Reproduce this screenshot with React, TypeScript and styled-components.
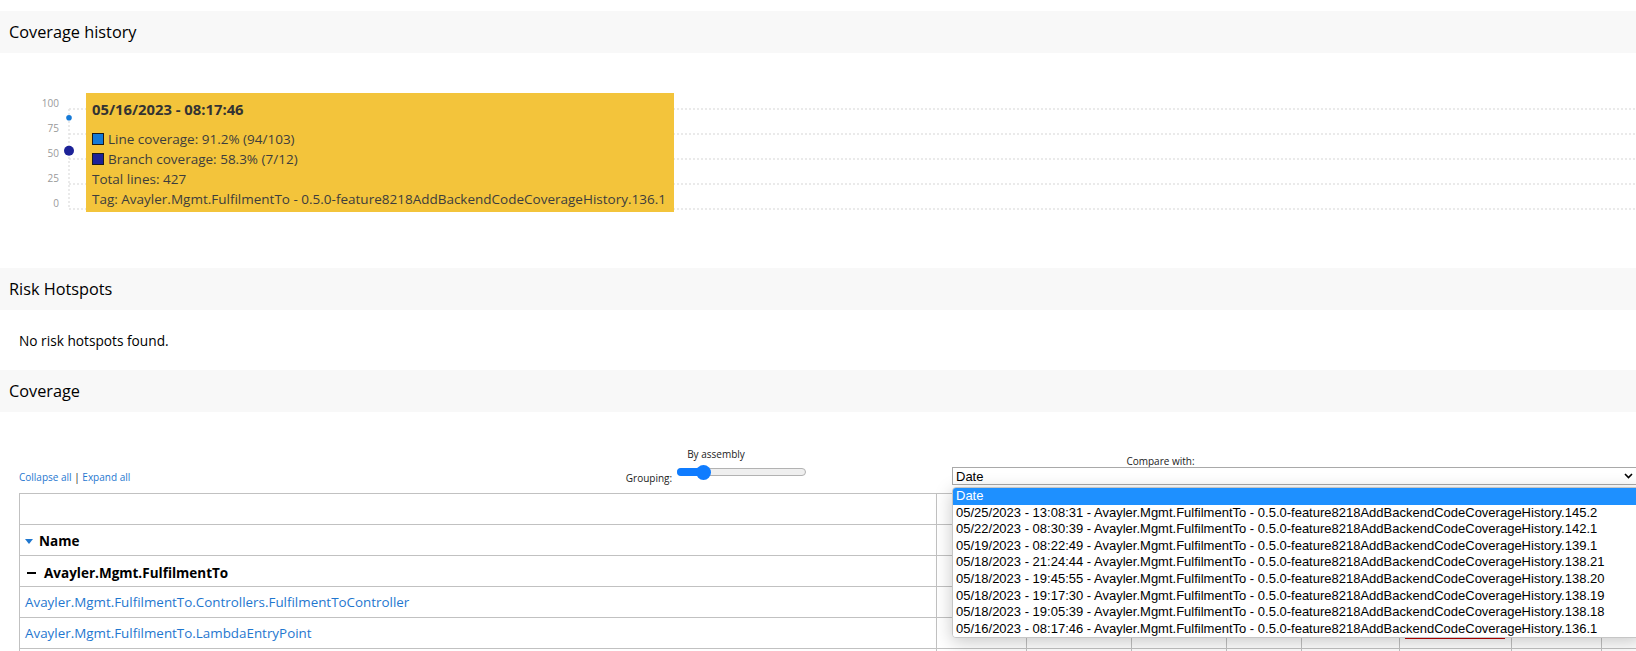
import React from "react";
import styled, { createGlobalStyle } from "styled-components";

const GlobalStyle = createGlobalStyle`
  html, body {
    margin: 0;
    padding: 0;
    background: #ffffff;
    overflow: hidden;
  }
  body {
    font-family: "Open Sans", "Noto Sans", sans-serif;
    color: #000000;
  }
`;

const LINE_BLUE = "#1479d7";
const BRANCH_BLUE = "#1c2298";

const history = [
  "05/25/2023 - 13:08:31 - Avayler.Mgmt.FulfilmentTo - 0.5.0-feature8218AddBackendCodeCoverageHistory.145.2",
  "05/22/2023 - 08:30:39 - Avayler.Mgmt.FulfilmentTo - 0.5.0-feature8218AddBackendCodeCoverageHistory.142.1",
  "05/19/2023 - 08:22:49 - Avayler.Mgmt.FulfilmentTo - 0.5.0-feature8218AddBackendCodeCoverageHistory.139.1",
  "05/18/2023 - 21:24:44 - Avayler.Mgmt.FulfilmentTo - 0.5.0-feature8218AddBackendCodeCoverageHistory.138.21",
  "05/18/2023 - 19:45:55 - Avayler.Mgmt.FulfilmentTo - 0.5.0-feature8218AddBackendCodeCoverageHistory.138.20",
  "05/18/2023 - 19:17:30 - Avayler.Mgmt.FulfilmentTo - 0.5.0-feature8218AddBackendCodeCoverageHistory.138.19",
  "05/18/2023 - 19:05:39 - Avayler.Mgmt.FulfilmentTo - 0.5.0-feature8218AddBackendCodeCoverageHistory.138.18",
  "05/16/2023 - 08:17:46 - Avayler.Mgmt.FulfilmentTo - 0.5.0-feature8218AddBackendCodeCoverageHistory.136.1",
];

interface ClassRow {
  name: string;
  covered: number;
  uncovered: number;
  coverable: number;
  total: number;
  bcovered: number;
  btotal: number;
}

const assembly: ClassRow = {
  name: "Avayler.Mgmt.FulfilmentTo",
  covered: 94,
  uncovered: 9,
  coverable: 103,
  total: 427,
  bcovered: 7,
  btotal: 12,
};

const classes: ClassRow[] = [
  {
    name: "Avayler.Mgmt.FulfilmentTo.Controllers.FulfilmentToController",
    covered: 94,
    uncovered: 8,
    coverable: 102,
    total: 372,
    bcovered: 7,
    btotal: 12,
  },
  {
    name: "Avayler.Mgmt.FulfilmentTo.LambdaEntryPoint",
    covered: 0,
    uncovered: 1,
    coverable: 1,
    total: 55,
    bcovered: 0,
    btotal: 0,
  },
  {
    name: "Avayler.Mgmt.FulfilmentTo.Startup",
    covered: 0,
    uncovered: 0,
    coverable: 0,
    total: 0,
    bcovered: 0,
    btotal: 0,
  },
];

const colWidths = [917, 90, 105, 95, 75, 98, 112, 90, 90, 98, 112];

const pct = (a: number, b: number) => (b === 0 ? null : Math.round((a / b) * 1000) / 10);

/* ---------- page + sections ---------- */

const Page = styled.div`
  width: 1636px;
  height: 651px;
  overflow: hidden;
  padding-top: 11px;
  box-sizing: border-box;
`;

const SectionTitle = styled.h1`
  margin: 0;
  height: 42px;
  padding: 0 9px;
  display: flex;
  align-items: center;
  background: #f8f8f8;
  font-size: 16.3px;
  font-weight: 400;
  color: #000;
`;

const ChartArea = styled.div`
  position: relative;
  height: 215px;
`;

const ChartSvg = styled.svg`
  display: block;
  width: 100%;
  height: 100%;
`;

const Tooltip = styled.div`
  position: absolute;
  left: 86px;
  top: 40px;
  width: 588px;
  height: 119px;
  box-sizing: border-box;
  padding: 6px 6px 0 6px;
  background: #f3c43b;
  color: #3d3d3d;
  font-size: 13.5px;
`;

const TooltipTitle = styled.div`
  font-weight: 700;
  font-size: 14.8px;
  line-height: 20px;
  color: #333;
  margin-bottom: 10px;
`;

const TooltipLine = styled.div`
  display: flex;
  align-items: center;
  line-height: 20px;
  white-space: nowrap;
`;

const Swatch = styled.span<{ $color: string }>`
  display: inline-block;
  width: 12px;
  height: 12px;
  box-sizing: border-box;
  border: 1px solid #1a1a1a;
  background: ${(p) => p.$color};
  margin-right: 4px;
`;

const Notice = styled.p`
  margin: 0;
  height: 60px;
  box-sizing: border-box;
  padding: 22px 19px 0;
  font-size: 13.7px;
  line-height: 18px;
`;

/* ---------- toolbar ---------- */

const Toolbar = styled.div`
  display: grid;
  grid-template-columns: 506px 382px 462px;
  align-items: end;
  height: 81px;
  box-sizing: border-box;
  padding: 0 0 8px 19px;
  font-size: 10px;
  color: #222;
`;

const LinkBar = styled.div`
  line-height: 14px;
  margin-bottom: 1px;
  color: #222;
`;

const ToolLink = styled.a`
  color: #1f77cf;
  text-decoration: none;
`;

const GroupingBox = styled.div`
  display: flex;
  flex-direction: column;
  align-items: center;
`;

const GroupingCaption = styled.div`
  line-height: 14px;
  margin-bottom: 6px;
`;

const GroupingRow = styled.div`
  display: flex;
  align-items: flex-end;
  height: 18px;
`;

const GroupingLabel = styled.span`
  line-height: 14px;
  margin-right: 5px;
`;

const SliderTrack = styled.div`
  position: relative;
  width: 129px;
  height: 8px;
  margin-bottom: 9px;
  box-sizing: border-box;
  border: 1px solid #b2b2b2;
  border-radius: 4px;
  background: #efefef;
`;

const SliderFill = styled.div`
  position: absolute;
  left: -1px;
  top: -1px;
  height: 8px;
  border-radius: 4px;
  background: #0f7cff;
`;

const SliderThumb = styled.div`
  position: absolute;
  top: 50%;
  width: 15px;
  height: 15px;
  margin: -7.5px 0 0 -7.5px;
  border-radius: 50%;
  background: #0f7cff;
`;

const CompareBox = styled.div`
  margin-left: 45px;
  text-align: center;
`;

const CompareLabel = styled.div`
  line-height: 12px;
`;

const SelectWrap = styled.div`
  position: relative;
  width: 690px;
  text-align: left;
  z-index: 2;
`;

const SelectBox = styled.div`
  height: 18px;
  box-sizing: border-box;
  border: 1px solid #a9a9a9;
  display: flex;
  align-items: center;
  justify-content: space-between;
  padding: 0 8px 0 3px;
  background: #fff;
  font-family: "Liberation Sans", Arial, sans-serif;
  font-size: 13px;
  color: #000;
`;

const OptionList = styled.div`
  position: absolute;
  left: 0;
  top: 20px;
  width: 100%;
  box-sizing: border-box;
  border: 1px solid #c6c6c6;
  border-radius: 4px;
  overflow: hidden;
  background: #fff;
  box-shadow: 0 4px 18px rgba(0, 0, 0, 0.22);
`;

const OptionItem = styled.div<{ $selected?: boolean }>`
  height: 16.6px;
  line-height: 16.6px;
  padding-left: 3px;
  white-space: nowrap;
  font-family: "Liberation Sans", Arial, sans-serif;
  font-size: 13px;
  color: ${(p) => (p.$selected ? "#fff" : "#000")};
  background: ${(p) => (p.$selected ? "#1e90ff" : "#fff")};
`;

/* ---------- table ---------- */

const CoverageTable = styled.table`
  margin-left: 19px;
  border-collapse: collapse;
  table-layout: fixed;
  width: ${colWidths.reduce((a, b) => a + b, 0)}px;
  font-size: 13.4px;
`;

const HeadCell = styled.th<{ $align?: string }>`
  height: 30px;
  padding: 0 5px;
  border: 1px solid #c1c1c1;
  text-align: ${(p) => p.$align || "left"};
  font-weight: 700;
  white-space: nowrap;
`;

const BodyCell = styled.td<{ $align?: string }>`
  height: 30px;
  padding: 0 5px;
  border: 1px solid #c1c1c1;
  text-align: ${(p) => p.$align || "left"};
  white-space: nowrap;
  overflow: hidden;
`;

const SortName = styled.span`
  display: inline-flex;
  align-items: center;
  gap: 6px;
  font-size: 13.5px;
`;

const AssemblyName = styled.span`
  display: inline-flex;
  align-items: center;
  font-weight: 700;
  font-size: 13.5px;
`;

const Minus = styled.span`
  display: inline-block;
  width: 9px;
  height: 2.5px;
  background: #000;
  margin: 0 8px 0 2px;
`;

const ClassLink = styled.a`
  color: #1f77cf;
  text-decoration: none;
`;

const Bar = styled.div`
  display: flex;
  width: 100px;
  height: 12px;
`;

const BarPart = styled.div<{ $covered: boolean }>`
  height: 100%;
  background: ${(p) => (p.$covered ? "#0aad0a" : "#c00000")};
`;

function CoverageBar({ value }: { value: number | null }) {
  if (value === null) return null;
  return (
    <Bar>
      <BarPart $covered style={{ width: `${value}%` }} />
      <BarPart $covered={false} style={{ width: `${100 - value}%` }} />
    </Bar>
  );
}

function Row({ row, bold }: { row: ClassRow; bold?: boolean }) {
  const line = pct(row.covered, row.coverable);
  const branch = pct(row.bcovered, row.btotal);
  const cellStyle = bold ? { fontWeight: 700 } : undefined;
  return (
    <tr style={cellStyle}>
      <BodyCell>
        {bold ? (
          <AssemblyName>
            <Minus />
            {row.name}
          </AssemblyName>
        ) : (
          <ClassLink href="#">{row.name}</ClassLink>
        )}
      </BodyCell>
      <BodyCell $align="right">{row.covered}</BodyCell>
      <BodyCell $align="right">{row.uncovered}</BodyCell>
      <BodyCell $align="right">{row.coverable}</BodyCell>
      <BodyCell $align="right">{row.total}</BodyCell>
      <BodyCell $align="right">{line === null ? "" : `${line}%`}</BodyCell>
      <BodyCell>
        <CoverageBar value={line} />
      </BodyCell>
      <BodyCell $align="right">{row.bcovered}</BodyCell>
      <BodyCell $align="right">{row.btotal}</BodyCell>
      <BodyCell $align="right">{branch === null ? "" : `${branch}%`}</BodyCell>
      <BodyCell>
        <CoverageBar value={branch} />
      </BodyCell>
    </tr>
  );
}

function HistoryChart() {
  const grid = [56, 81, 106, 131, 156];
  const labels = ["100", "75", "50", "25", "0"];
  return (
    <ChartSvg viewBox="0 0 1636 215" preserveAspectRatio="none">
      {grid.map((y, i) => (
        <g key={y}>
          <line x1={69} x2={1636} y1={y} y2={y} stroke="#e4e4e4" strokeWidth={1.5} strokeDasharray="2 2" />
          <text
            x={59}
            y={y - 2}
            textAnchor="end"
            fontSize={10}
            fill="#9a9a9a"
            fontFamily="Open Sans, sans-serif"
          >
            {labels[i]}
          </text>
        </g>
      ))}
      <line x1={69} x2={69} y1={56} y2={156} stroke="#e4e4e4" strokeWidth={1.5} strokeDasharray="2 2" />
      <circle cx={69} cy={64.8} r={2.8} fill={LINE_BLUE} />
      <circle cx={69} cy={97.7} r={5} fill={BRANCH_BLUE} />
    </ChartSvg>
  );
}

export default function App() {
  return (
    <Page>
      <GlobalStyle />
      <SectionTitle>Coverage history</SectionTitle>
      <ChartArea>
        <HistoryChart />
        <Tooltip>
          <TooltipTitle>05/16/2023 - 08:17:46</TooltipTitle>
          <TooltipLine>
            <Swatch $color={LINE_BLUE} />
            Line coverage: 91.2% (94/103)
          </TooltipLine>
          <TooltipLine>
            <Swatch $color={BRANCH_BLUE} />
            Branch coverage: 58.3% (7/12)
          </TooltipLine>
          <TooltipLine>Total lines: 427</TooltipLine>
          <TooltipLine>Tag: Avayler.Mgmt.FulfilmentTo - 0.5.0-feature8218AddBackendCodeCoverageHistory.136.1</TooltipLine>
        </Tooltip>
      </ChartArea>

      <SectionTitle>Risk Hotspots</SectionTitle>
      <Notice>No risk hotspots found.</Notice>

      <SectionTitle>Coverage</SectionTitle>
      <Toolbar>
        <LinkBar>
          <ToolLink href="#">Collapse all</ToolLink> | <ToolLink href="#">Expand all</ToolLink>
        </LinkBar>
        <GroupingBox>
          <GroupingCaption>By assembly</GroupingCaption>
          <GroupingRow>
            <GroupingLabel>Grouping:</GroupingLabel>
            <SliderTrack>
              <SliderFill style={{ width: "27px" }} />
              <SliderThumb style={{ left: "25px" }} />
            </SliderTrack>
          </GroupingRow>
        </GroupingBox>
        <CompareBox>
          <CompareLabel>Compare with:</CompareLabel>
          <SelectWrap>
            <SelectBox>
              <span>Date</span>
              <svg width="9" height="6" viewBox="0 0 9 6">
                <path d="M1 1 L4.5 4.5 L8 1" fill="none" stroke="#000" strokeWidth="1.6" />
              </svg>
            </SelectBox>
            <OptionList>
              <OptionItem $selected>Date</OptionItem>
              {history.map((h) => (
                <OptionItem key={h}>{h}</OptionItem>
              ))}
            </OptionList>
          </SelectWrap>
        </CompareBox>
      </Toolbar>

      <CoverageTable>
        <colgroup>
          {colWidths.map((w, i) => (
            <col key={i} style={{ width: `${w}px` }} />
          ))}
        </colgroup>
        <thead>
          <tr>
            <HeadCell />
            <HeadCell colSpan={6} $align="center">
              Line coverage
            </HeadCell>
            <HeadCell colSpan={4} $align="center">
              Branch coverage
            </HeadCell>
          </tr>
          <tr>
            <HeadCell>
              <SortName>
                <svg width="8" height="5" viewBox="0 0 8 5">
                  <path d="M0 0 H8 L4 5 Z" fill="#1f77cf" />
                </svg>
                Name
              </SortName>
            </HeadCell>
            <HeadCell $align="right">Covered</HeadCell>
            <HeadCell $align="right">Uncovered</HeadCell>
            <HeadCell $align="right">Coverable</HeadCell>
            <HeadCell $align="right">Total</HeadCell>
            <HeadCell colSpan={2} $align="center">
              Percentage
            </HeadCell>
            <HeadCell $align="right">Covered</HeadCell>
            <HeadCell $align="right">Total</HeadCell>
            <HeadCell colSpan={2} $align="center">
              Percentage
            </HeadCell>
          </tr>
        </thead>
        <tbody>
          <Row row={assembly} bold />
          {classes.map((c) => (
            <Row key={c.name} row={c} />
          ))}
        </tbody>
      </CoverageTable>
    </Page>
  );
}
